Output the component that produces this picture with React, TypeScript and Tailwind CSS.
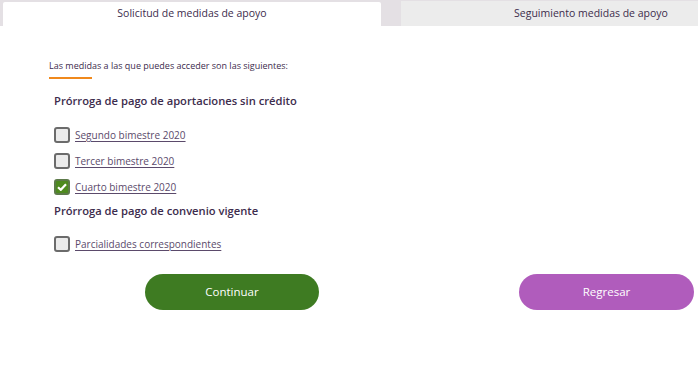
import React from "react";

const font = { fontFamily: '"Open Sans", "Noto Sans", sans-serif' };

function Check({ label, checked }: { label: string; checked?: boolean }) {
  return (
    <div className="flex items-center h-[16px]">
      {checked ? (
        <div className="w-[16px] h-[16px] rounded-[3px] bg-[#4e8a1f] border-2 border-[#5d7a4a] flex items-center justify-center">
          <svg width="10" height="8" viewBox="0 0 10 8">
            <path d="M1 4.2 L3.8 6.8 L9 1.2" stroke="#fff" strokeWidth="2.2" fill="none" />
          </svg>
        </div>
      ) : (
        <div className="w-[16px] h-[16px] rounded-[3px] bg-[#ebebeb] border-2 border-[#6b6b6b]" />
      )}
      <span className="ml-[5px] text-[10px] text-[#5b4a6b] underline underline-offset-2 decoration-[#5b4a6b]">{label}</span>
    </div>
  );
}

export default function App() {
  return (
    <div className="w-[698px] h-[390px] bg-white overflow-hidden" style={font}>
      <div className="flex h-[26px] bg-[#e4e0e4] pt-[2px] overflow-hidden">
        <div className="ml-[3px] w-[378px] shrink-0 bg-white rounded-t-[2px] flex items-center justify-center text-[10.5px] text-[#3d2c4d]">
          Solicitud de medidas de apoyo
        </div>
        <div className="w-[20px] shrink-0" />
        <div className="w-[380px] shrink-0 bg-[#ececec] -mt-[1px] flex items-center justify-center text-[10.5px] text-[#3d2c4d]">
          Seguimiento medidas de apoyo
        </div>
      </div>
      <div className="pl-[49px]">
        <div className="pt-[33px] text-[9px] leading-[14px] text-[#3d2c4d]">Las medidas a las que puedes acceder son las siguientes:</div>
        <div className="mt-[4px] w-[43px] h-[2px] bg-[#f0891c]" />
        <div className="mt-[14px] ml-[5px] text-[11.2px] leading-[16px] font-semibold text-[#3d2c4d]">
          Prórroga de pago de aportaciones sin crédito
        </div>
        <div className="ml-[5px] mt-[18px] flex flex-col gap-[10px]">
          <Check label="Segundo bimestre 2020" />
          <Check label="Tercer bimestre 2020" />
          <Check label="Cuarto bimestre 2020" checked />
        </div>
        <div className="mt-[8px] ml-[5px] text-[11.2px] leading-[16px] font-semibold text-[#3d2c4d]">
          Prórroga de pago de convenio vigente
        </div>
        <div className="ml-[5px] mt-[17px]">
          <Check label="Parcialidades correspondientes" />
        </div>
      </div>
      <div className="flex mt-[22px]">
        <button className="ml-[145px] w-[174px] h-[36px] rounded-full bg-[#3e7b22] text-white text-[11.5px]">Continuar</button>
        <button className="ml-[200px] w-[175px] h-[36px] rounded-full bg-[#b05cbc] text-white text-[11.5px]">Regresar</button>
      </div>
    </div>
  );
}
